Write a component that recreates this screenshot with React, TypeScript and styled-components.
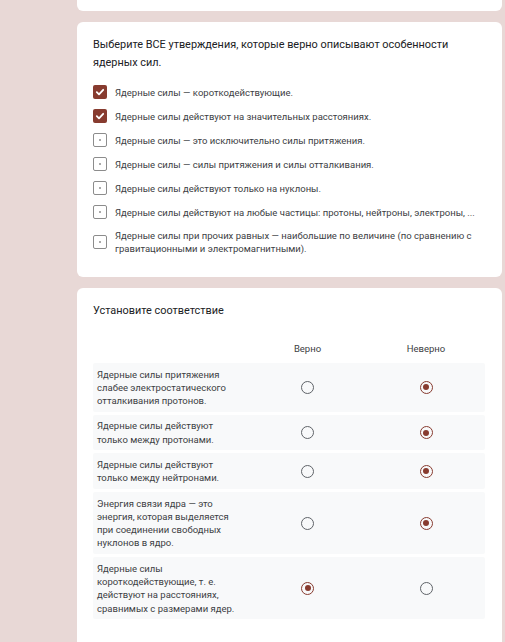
import styled, { createGlobalStyle } from "styled-components";

const GlobalStyle = createGlobalStyle`
  html, body {
    margin: 0;
    padding: 0;
    background: #e8d8d6;
  }
  body {
    font-family: Roboto, "Noto Sans", Arial, sans-serif;
    color: #202124;
  }
`;

const accent = "#873b2f";

const Page = styled.div`
  display: flex;
  flex-direction: column;
  gap: 11px;
  padding: 0 3px 0 77px;
`;

const Card = styled.section<{ $stub?: boolean }>`
  background: #fff;
  border-radius: ${(p) => (p.$stub ? "0 0 6px 6px" : "6px")};
  height: ${(p) => (p.$stub ? "11px" : "auto")};
  padding: ${(p) => (p.$stub ? "0" : "14px 16px 17px")};
  box-sizing: border-box;
`;

const Title = styled.div`
  font-size: 10.9px;
  line-height: 18px;
  color: #202124;
`;

const OptionList = styled.div`
  display: flex;
  flex-direction: column;
  margin-top: 8px;
`;

const Option = styled.label`
  display: flex;
  align-items: center;
  gap: 8px;
  min-height: 24px;
  padding: 5px 0;
  box-sizing: border-box;
`;

const Box = styled.span<{ $checked?: boolean }>`
  flex: none;
  width: 14px;
  height: 14px;
  box-sizing: border-box;
  border-radius: 2px;
  background: ${(p) => (p.$checked ? accent : "#fff")};
  border: ${(p) => (p.$checked ? "none" : "1.5px solid #8c8c8c")};
  display: flex;
  align-items: center;
  justify-content: center;
  ${(p) =>
    !p.$checked &&
    `
    &::after {
      content: "";
      width: 1.5px;
      height: 1.5px;
      background: #9a9a9a;
      border-radius: 50%;
    }
  `}
`;

const OptionText = styled.span`
  font-size: 9.5px;
  line-height: 13px;
  color: #3c4043;
`;

const Grid = styled.div`
  display: flex;
  flex-direction: column;
  gap: 3px;
  margin-top: 16px;
  margin-bottom: 24px;
  width: 392px;
`;

const GridRow = styled.div<{ $head?: boolean }>`
  display: grid;
  grid-template-columns: 155px 119px 118px;
  align-items: center;
  background: ${(p) => (p.$head ? "transparent" : "#f8f9fa")};
  min-height: ${(p) => (p.$head ? "24px" : "0")};
  border-radius: 2px;
`;

const RowLabel = styled.div`
  font-size: 9.5px;
  line-height: 13.3px;
  color: #3c4043;
  padding: 4.5px 6px 4.5px 4px;
`;

const HeadCell = styled.div`
  font-size: 9.5px;
  color: #3c4043;
  text-align: center;
`;

const Cell = styled.div`
  display: flex;
  justify-content: center;
  align-items: center;
`;

const Radio = styled.span<{ $checked?: boolean }>`
  width: 13px;
  height: 13px;
  box-sizing: border-box;
  border-radius: 50%;
  border: 1.5px solid ${(p) => (p.$checked ? accent : "#5f6368")};
  display: flex;
  align-items: center;
  justify-content: center;
  &::after {
    content: "";
    display: ${(p) => (p.$checked ? "block" : "none")};
    width: 6px;
    height: 6px;
    border-radius: 50%;
    background: ${accent};
  }
`;

const Check = () => (
  <svg width="10" height="10" viewBox="0 0 10 10">
    <path d="M1.8 5.2 L4 7.3 L8.2 2.8" fill="none" stroke="#fff" strokeWidth="1.8" strokeLinecap="round" strokeLinejoin="round" />
  </svg>
);

const options = [
  { text: "Ядерные силы — короткодействующие.", checked: true },
  { text: "Ядерные силы действуют на значительных расстояниях.", checked: true },
  { text: "Ядерные силы — это исключительно силы притяжения.", checked: false },
  { text: "Ядерные силы — силы притяжения и силы отталкивания.", checked: false },
  { text: "Ядерные силы действуют только на нуклоны.", checked: false },
  { text: "Ядерные силы действуют на любые частицы: протоны, нейтроны, электроны, ...", checked: false },
  {
    text: "Ядерные силы при прочих равных — наибольшие по величине (по сравнению с гравитационными и электромагнитными).",
    checked: false,
  },
];

const rows = [
  { text: "Ядерные силы притяжения слабее электростатического отталкивания протонов.", answer: 1 },
  { text: "Ядерные силы действуют только между протонами.", answer: 1 },
  { text: "Ядерные силы действуют только между нейтронами.", answer: 1 },
  { text: "Энергия связи ядра — это энергия, которая выделяется при соединении свободных нуклонов в ядро.", answer: 1 },
  { text: "Ядерные силы короткодействующие, т. е. действуют на расстояниях, сравнимых с размерами ядер.", answer: 0 },
];

export default function App() {
  return (
    <>
      <GlobalStyle />
      <Page>
        <Card $stub />
        <Card>
          <Title>Выберите ВСЕ утверждения, которые верно описывают особенности ядерных сил.</Title>
          <OptionList>
            {options.map((o) => (
              <Option key={o.text}>
                <Box $checked={o.checked}>{o.checked && <Check />}</Box>
                <OptionText>{o.text}</OptionText>
              </Option>
            ))}
          </OptionList>
        </Card>
        <Card>
          <Title>Установите соответствие</Title>
          <Grid>
            <GridRow $head>
              <div />
              <HeadCell>Верно</HeadCell>
              <HeadCell>Неверно</HeadCell>
            </GridRow>
            {rows.map((r) => (
              <GridRow key={r.text}>
                <RowLabel>{r.text}</RowLabel>
                <Cell>
                  <Radio $checked={r.answer === 0} />
                </Cell>
                <Cell>
                  <Radio $checked={r.answer === 1} />
                </Cell>
              </GridRow>
            ))}
          </Grid>
        </Card>
      </Page>
    </>
  );
}
